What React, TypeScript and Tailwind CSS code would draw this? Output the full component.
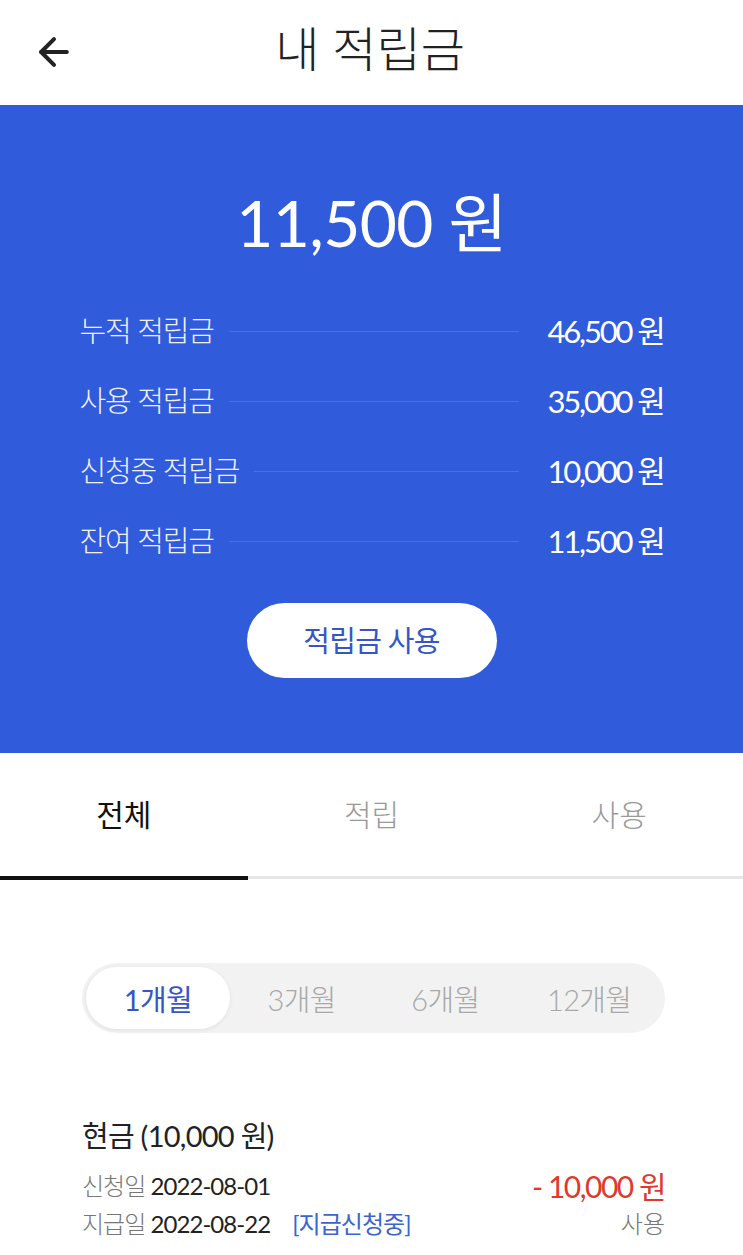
import { ArrowLeft } from 'lucide-react';

const font = "font-['Lato','Noto_Sans_CJK_KR',sans-serif]";

const rows = [
  { label: '누적 적립금', value: '46,500 원' },
  { label: '사용 적립금', value: '35,000 원' },
  { label: '신청중 적립금', value: '10,000 원' },
  { label: '잔여 적립금', value: '11,500 원' },
];

export default function App() {
  return (
    <div className={`${font} w-[743px] min-h-[1255px] bg-white overflow-hidden`}>
      {/* Header */}
      <header className="relative h-[105px] flex items-center justify-center">
        <ArrowLeft className="absolute left-[32px] top-[30px] w-[44px] h-[44px] text-[#222]" strokeWidth={2.2} />
        <h1 className="text-[48px] font-light text-[#222] -mt-[8px] ml-[-3px]">내 적립금</h1>
      </header>

      {/* Summary */}
      <section className="bg-[#305bdb] h-[648px] flex flex-col items-center pt-[86px]">
        <div className="text-[64px] text-white leading-none tracking-[-0.01em]">11,500 원</div>
        <div className="w-[584px] mt-[60px] flex flex-col gap-[38px]">
          {rows.map((r) => (
            <div key={r.label} className="flex items-center h-[32px] text-white">
              <span className="text-[29px] font-light text-[#eef1fc] tracking-[-0.04em]">{r.label}</span>
              <span className="flex-1 h-px bg-[#4a70e2] ml-[15px] mr-[28px]" />
              <span className="text-[31px] tracking-[-0.07em]">{r.value}</span>
            </div>
          ))}
        </div>
        <button className="mt-[46px] w-[250px] h-[75px] rounded-full bg-white text-[#3556c4] text-[29px] tracking-tight">
          적립금 사용
        </button>
      </section>

      {/* Tabs */}
      <nav className="grid grid-cols-3 h-[127px]">
        {['전체', '적립', '사용'].map((t, i) => (
          <div key={t} className="flex flex-col">
            <div className={`flex-1 flex items-center justify-center text-[30px] ${i === 0 ? 'text-[#111]' : 'text-[#9a9a9a] font-light'}`}>
              {t}
            </div>
            <div className={i === 0 ? 'h-[4px] bg-[#111]' : 'h-[3px] mb-px bg-[#e6e6e6]'} />
          </div>
        ))}
      </nav>

      {/* Period */}
      <div className="pl-[82px] pr-[78px] mt-[83px]">
        <div className="h-[70px] rounded-full bg-[#f2f2f2] p-[4px] grid grid-cols-4">
          {['1개월', '3개월', '6개월', '12개월'].map((p, i) => (
            <div
              key={p}
              className={`flex items-center justify-center rounded-full text-[29px] tracking-tight pt-[4px] ${i === 0 ? 'bg-white text-[#3556c4] shadow-[0_1px_4px_rgba(0,0,0,0.08)]' : 'text-[#a8a8a8] font-light'}`}
            >
              {p}
            </div>
          ))}
        </div>
      </div>

      {/* Item */}
      <div className="pl-[82px] pr-[78px] mt-[82px]">
        <div className="text-[29px] text-[#222] tracking-tight leading-[42px]">현금 (10,000 원)</div>
        <div className="flex items-end justify-between mt-[10px]">
          <div className="text-[24px] leading-[38px] tracking-[-0.04em]">
            <div>
              <span className="text-[#777] font-light">신청일</span> <span className="text-[#222]">2022-08-01</span>
            </div>
            <div>
              <span className="text-[#777] font-light">지급일</span> <span className="text-[#222]">2022-08-22</span>
              <span className="text-[#3a64d0] ml-[22px]">[지급신청중]</span>
            </div>
          </div>
          <div className="flex flex-col items-end">
            <div className="text-[30px] text-[#e0392b] leading-[38px] tracking-[-0.05em]">- 10,000 원</div>
            <div className="text-[24px] text-[#777] font-light leading-[38px]">사용</div>
          </div>
        </div>
      </div>
    </div>
  );
}
